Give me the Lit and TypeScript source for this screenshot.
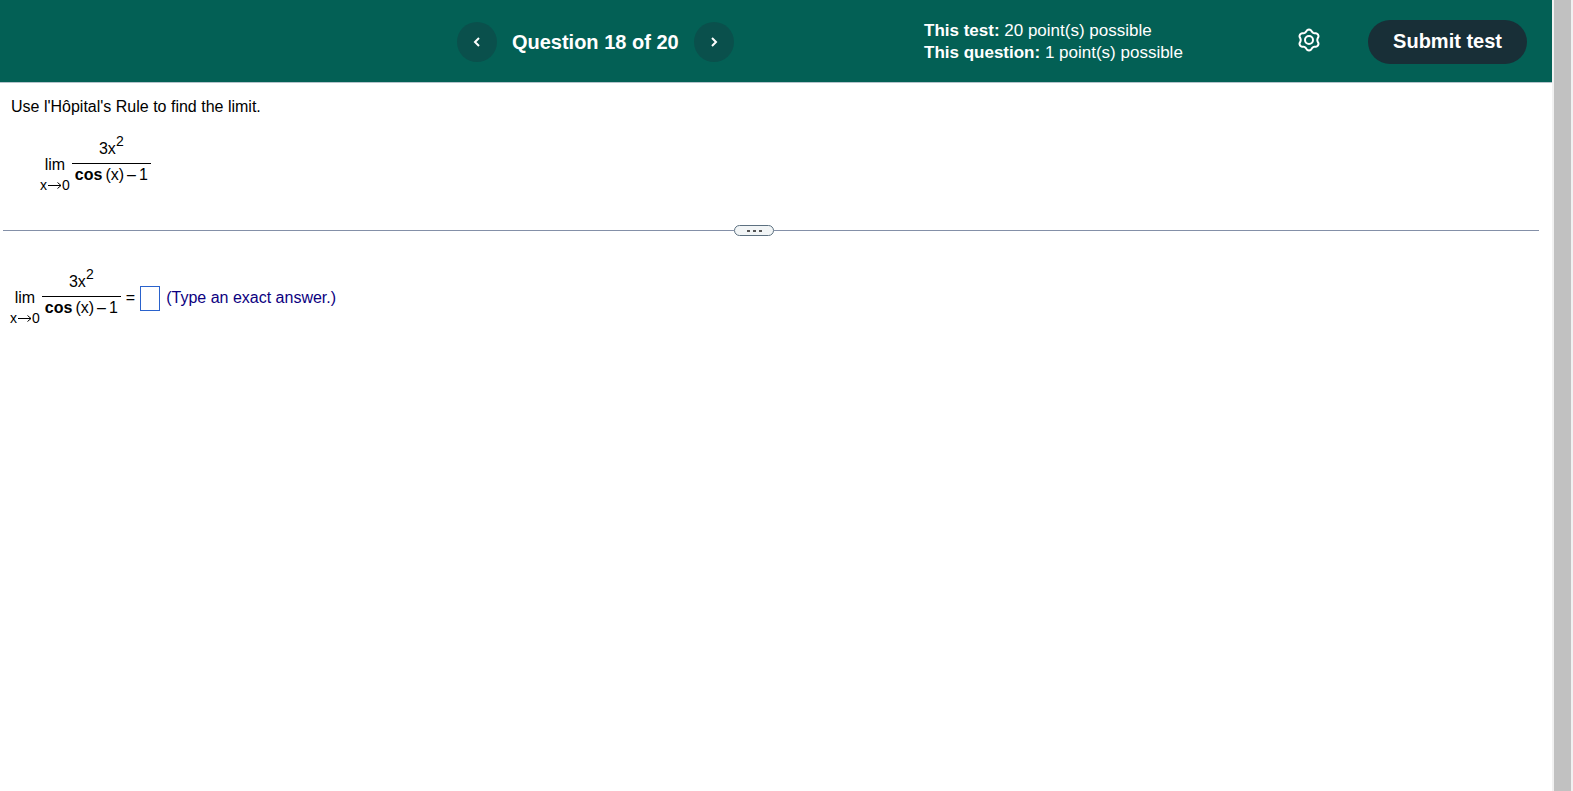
import { LitElement, html, css } from "lit";
import { customElement, property } from "lit/decorators.js";

/** Outline of a six-lobed gear centred in a 24x24 box. */
const gearPath = (() => {
  const points: string[] = [];
  for (let i = 0; i < 72; i++) {
    const a = (i * Math.PI) / 36;
    const c = Math.cos(6 * a);
    const r = 9.4 + 1.1 * Math.sign(c) * Math.pow(Math.abs(c), 0.7);
    points.push(`${(12 + r * Math.sin(a)).toFixed(2)} ${(12 - r * Math.cos(a)).toFixed(2)}`);
  }
  return `M${points.join("L")}Z`;
})();

@customElement("limit-expression")
class LimitExpression extends LitElement {
  static styles = css`
    :host {
      display: flex;
      align-items: flex-start;
      font-size: 16px;
      line-height: 20px;
    }
    .limit {
      display: flex;
      flex-direction: column;
      align-items: center;
      padding-top: 20px;
    }
    .approach {
      display: flex;
      align-items: center;
      font-size: 14px;
    }
    .arrow {
      width: 15px;
      height: 9px;
      fill: none;
      stroke: #000;
    }
    .fraction {
      display: flex;
      flex-direction: column;
      align-items: center;
      margin-left: 2px;
    }
    .numerator {
      display: flex;
      padding: 4px 0;
    }
    .power {
      font-size: 14px;
      line-height: 4px;
    }
    .denominator {
      display: flex;
      gap: 3px;
      border-top: 1px solid #000;
      padding: 1px 3px;
      white-space: nowrap;
    }
  `;
  render() {
    return html`
      <div class="limit">
        <span>lim</span>
        <span class="approach"
          >x<svg class="arrow" viewBox="0 0 15 9" role="img" aria-label="approaches">
            <path d="M1 4.5H14M10.5 1.5L14 4.5L10.5 7.5" /></svg
          >0</span
        >
      </div>
      <div class="fraction">
        <div class="numerator"><span>3x</span><span class="power">2</span></div>
        <div class="denominator">
          <b>cos</b><span>(x)</span><span>–</span><span>1</span>
        </div>
      </div>
    `;
  }
}

@customElement("app-root")
class AppRoot extends LitElement {
  @property({ type: Number }) question = 18;
  @property({ type: Number }) total = 20;

  static styles = css`
    :host {
      display: flex;
      min-height: 100vh;
      background: #fff;
      color: #000;
      font: 16px/20px "Liberation Sans", Arial, sans-serif;
    }
    .page {
      flex: 1;
      min-width: 0;
    }
    .header {
      display: grid;
      grid-template-columns: 12fr auto 5fr auto 3fr auto;
      align-items: center;
      height: 80px;
      padding: 2px 25px 0 0;
      border-bottom: 1px solid #b5c3cb;
      background: #036055;
      color: #fff;
    }
    .pager {
      grid-column: 2;
      display: flex;
      align-items: center;
      gap: 15px;
    }
    .title {
      margin: 0;
      font-size: 20px;
      line-height: 24px;
      white-space: nowrap;
    }
    button {
      padding: 0;
      border: 0;
      font-family: inherit;
      color: inherit;
      cursor: pointer;
    }
    .step {
      display: grid;
      place-items: center;
      width: 40px;
      height: 40px;
      border-radius: 50%;
      background: #0a504c;
    }
    .chevron {
      width: 8px;
      height: 12px;
      fill: none;
      stroke: #fff;
      stroke-width: 2;
    }
    .points {
      grid-column: 4;
      font-size: 17px;
      line-height: 22px;
      white-space: nowrap;
    }
    .points p {
      margin: 0;
    }
    .actions {
      grid-column: 6;
      display: flex;
      align-items: center;
      gap: 47px;
    }
    .settings {
      padding-bottom: 4px;
      background: none;
    }
    .gear {
      display: block;
      width: 24px;
      height: 24px;
      fill: none;
      stroke: #fff;
      stroke-width: 2;
      stroke-linejoin: round;
    }
    .submit {
      height: 44px;
      padding: 0 25px 2px;
      border-radius: 22px;
      background: #182f37;
      font-size: 20px;
      line-height: 24px;
      font-weight: bold;
      white-space: nowrap;
    }
    .prompt {
      padding: 14px 11px 0;
    }
    .prompt p {
      margin: 0;
    }
    .given {
      margin: 18px 0 0 29px;
    }
    .divider {
      display: flex;
      align-items: center;
      margin: 30px 13px 0 3px;
    }
    .divider::before,
    .divider::after {
      content: "";
      border-top: 1px solid #8490a8;
    }
    .divider::before {
      flex: 43;
    }
    .divider::after {
      flex: 45;
    }
    .more {
      display: flex;
      align-items: center;
      justify-content: center;
      gap: 3px;
      width: 40px;
      height: 11px;
      border: 1px solid #5c7080;
      border-radius: 6px;
      background: #f2f5f6;
    }
    .dot {
      width: 3px;
      height: 2px;
      background: #555;
    }
    .response {
      display: flex;
      align-items: center;
      margin: 32px 10px 0;
    }
    .equals {
      margin: 0 5px;
    }
    .answer {
      box-sizing: border-box;
      width: 20px;
      height: 25px;
      padding: 0 2px;
      border: 1px solid #2a62cc;
      border-radius: 0;
      background: #fff;
      font: inherit;
    }
    .hint {
      margin-left: 6px;
      color: #0c0080;
    }
    .scrollbar {
      box-sizing: border-box;
      width: 21px;
      padding: 0 2px;
      background: #f1f1f1;
    }
    .thumb {
      height: 100%;
      background: #c1c1c1;
    }
  `;

  render() {
    return html`
      <div class="page">
        <header class="header">
          <nav class="pager" aria-label="Questions">
            <button class="step" aria-label="Previous question">
              <svg class="chevron" viewBox="0 0 8 12"><path d="M6 2L2 6L6 10" /></svg>
            </button>
            <h1 class="title">Question ${this.question} of ${this.total}</h1>
            <button class="step" aria-label="Next question">
              <svg class="chevron" viewBox="0 0 8 12"><path d="M2 2L6 6L2 10" /></svg>
            </button>
          </nav>
          <div class="points">
            <p><b>This test:</b> 20 point(s) possible</p>
            <p><b>This question:</b> 1 point(s) possible</p>
          </div>
          <div class="actions">
            <button class="settings" aria-label="Settings">
              <svg class="gear" viewBox="0 0 24 24">
                <path d=${gearPath} />
                <circle cx="12" cy="12" r="4" />
              </svg>
            </button>
            <button class="submit">Submit test</button>
          </div>
        </header>
        <main>
          <section class="prompt">
            <p>Use l'Hôpital's Rule to find the limit.</p>
            <limit-expression class="given"></limit-expression>
          </section>
          <div class="divider">
            <button class="more" aria-label="Resize panels">
              <span class="dot"></span><span class="dot"></span><span class="dot"></span>
            </button>
          </div>
          <section class="response">
            <limit-expression></limit-expression>
            <span class="equals">=</span>
            <input class="answer" id="answer" type="text" autocomplete="off" />
            <label class="hint" for="answer">(Type an exact answer.)</label>
          </section>
        </main>
      </div>
      <div class="scrollbar"><div class="thumb"></div></div>
    `;
  }
}
